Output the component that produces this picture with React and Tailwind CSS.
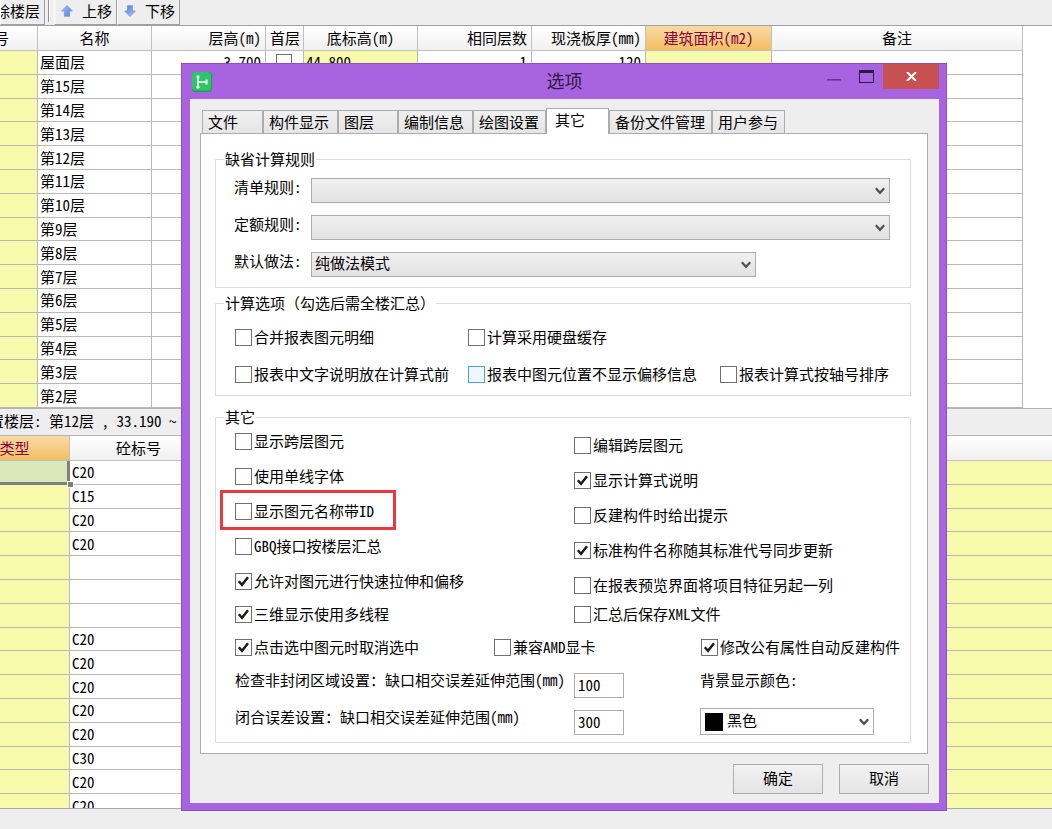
import React, { useState } from "react";
import clsx from "clsx";

const floors = [
  "屋面层",
  "第15层",
  "第14层",
  "第13层",
  "第12层",
  "第11层",
  "第10层",
  "第9层",
  "第8层",
  "第7层",
  "第6层",
  "第5层",
  "第4层",
  "第3层",
  "第2层",
];

const grades = [
  "C20",
  "C15",
  "C20",
  "C20",
  "",
  "",
  "",
  "C20",
  "C20",
  "C20",
  "C20",
  "C20",
  "C30",
  "C20",
  "C20",
];

const tabs = [
  { name: "文件", width: "w-[61px]" },
  { name: "构件显示", width: "w-[75px]" },
  { name: "图层", width: "w-[60px]" },
  { name: "编制信息", width: "w-[75px]" },
  { name: "绘图设置", width: "w-[73px]" },
  { name: "其它", width: "w-[63px]" },
  { name: "备份文件管理", width: "w-[103px]" },
  { name: "用户参与", width: "w-[73px]" },
];

const leftOptions = [
  { text: "显示跨层图元" },
  { text: "使用单线字体" },
  { text: "显示图元名称带ID", marked: true },
  { text: "GBQ接口按楼层汇总" },
  { text: "允许对图元进行快速拉伸和偏移", checked: true },
];

const rightOptions = [
  { text: "编辑跨层图元" },
  { text: "显示计算式说明", checked: true },
  { text: "反建构件时给出提示" },
  { text: "标准构件名称随其标准代号同步更新", checked: true },
  { text: "在报表预览界面将项目特征另起一列" },
];

const App = () => {
  return (
    <div className="relative flex h-screen min-h-[829px] flex-col overflow-hidden bg-[#eeeeee] font-['Noto_Sans_CJK_SC',sans-serif] text-[15px] leading-[18px] text-black [font-feature-settings:'hwid']">
      <Toolbar />
      <FloorTable />
      <div className="flex h-[28px] shrink-0 items-center border-y border-[#b4b4b4] bg-[#eeeeee] pb-[2px]">
        <p className="-ml-[11px] whitespace-nowrap">
          置楼层: 第12层 , 33.190 ~
        </p>
      </div>
      <GradeTable />
      <div className="h-[21px] shrink-0 border-t border-[#a8a8b0]" />
      <OptionsDialog />
    </div>
  );
};

const Toolbar = () => (
  <div className="flex h-[26px] shrink-0 items-start border-b border-[#a0a0a0]">
    <ToolButton className="w-[45px] justify-end pr-[4px]">删除楼层</ToolButton>
    <div className="ml-[3px] h-[22px] w-[2px] border-x border-r-white border-l-[#909090]" />
    <ToolButton className="ml-[4px] w-[63px] justify-between pr-[4px] pl-[5px]">
      <Arrow />
      上移
    </ToolButton>
    <ToolButton className="w-[63px] justify-between pr-[4px] pl-[5px]">
      <Arrow down />
      下移
    </ToolButton>
  </div>
);

const ToolButton = ({ className, children }) => (
  <button
    type="button"
    className={clsx(
      "flex h-[25px] items-center overflow-hidden border-r border-b border-l border-r-[#a0a0a0] border-b-[#a0a0a0] border-l-white pb-[3px] whitespace-nowrap",
      className
    )}
  >
    {children}
  </button>
);

const Arrow = ({ down }) => (
  <svg
    width="14"
    height="14"
    viewBox="0 0 14 14"
    className={clsx(down && "rotate-180")}
  >
    <defs>
      <linearGradient id="arrow" x1="0" y1="0" x2="1" y2="1">
        <stop offset="0" stopColor="#a9c8f5" />
        <stop offset="1" stopColor="#4d7bd6" />
      </linearGradient>
    </defs>
    <path
      d="M7 1.5 L12.3 7 H9.6 V12.3 H4.4 V7 H1.7 Z"
      fill="url(#arrow)"
      stroke="#6f93dc"
      strokeWidth="0.8"
    />
  </svg>
);

const Th = ({ className, children }) => (
  <th
    className={clsx(
      "h-[25px] border-r border-b border-[#c0c0c0] bg-linear-to-b p-0 px-[4px] font-normal whitespace-nowrap",
      className ?? "from-white to-[#f0f0f0]"
    )}
  >
    {children}
  </th>
);

const Td = ({ className, children }) => (
  <td
    className={clsx(
      "h-[23px] border-r border-b border-[#b8b8b8] p-0 pr-[4px] pl-[2px] whitespace-nowrap",
      className
    )}
  >
    {children}
  </td>
);

const FloorTable = () => (
  <div className="shrink-0 overflow-hidden bg-white pr-[29px]">
    {/* the first column runs off the left edge, as if scrolled */}
    <div className="-ml-[49px]">
      <table className="h-[382px] w-full table-fixed border-separate border-spacing-0">
        <colgroup>
          <col className="w-[87px]" />
          <col className="w-[114px]" />
          <col className="w-[114px]" />
          <col className="w-[38px]" />
          <col className="w-[114px]" />
          <col className="w-[114px]" />
          <col className="w-[114px]" />
          <col className="w-[126px]" />
          <col />
        </colgroup>
        <thead>
          <tr>
            <Th>编号</Th>
            <Th>名称</Th>
            <Th className="from-white to-[#f0f0f0] text-right">层高(m)</Th>
            <Th className="from-white to-[#f0f0f0] px-0">首层</Th>
            <Th>底标高(m)</Th>
            <Th className="from-white to-[#f0f0f0] text-right">相同层数</Th>
            <Th className="from-white to-[#f0f0f0] text-right">
              现浇板厚(mm)
            </Th>
            <Th className="from-[#f8d9a4] to-[#f2bf62] text-[#800040]">
              建筑面积(m2)
            </Th>
            <Th>备注</Th>
          </tr>
        </thead>
        <tbody>
          {floors.map((floor, i) => (
            <tr key={floor}>
              <Td className="bg-[#f6faaa]" />
              <Td>{floor}</Td>
              <Td className="text-right">{i === 0 && "3.700"}</Td>
              <Td>
                {i === 0 && (
                  <input
                    type="checkbox"
                    aria-label="首层"
                    className="mx-auto block size-[16px] appearance-none border border-[#707070] bg-white"
                  />
                )}
              </Td>
              <Td className="bg-[#f6faaa]">{i === 0 && "44.800"}</Td>
              <Td className="text-right">{i === 0 && "1"}</Td>
              <Td className="text-right">{i === 0 && "120"}</Td>
              <Td className="bg-[#f6faaa]" />
              <Td />
            </tr>
          ))}
        </tbody>
      </table>
    </div>
  </div>
);

const GradeTable = () => (
  <div className="min-h-0 flex-1 overflow-hidden bg-white">
    <div className="-mr-px -ml-[70px]">
      <table className="h-[382px] w-full table-fixed border-separate border-spacing-0">
        <colgroup>
          <col className="w-[140px]" />
          <col className="w-[138px]" />
          <col />
        </colgroup>
        <thead>
          <tr>
            <Th className="from-[#f8d9a4] to-[#f2bf62] text-[#800040]">
              构件类型
            </Th>
            <Th>砼标号</Th>
            <Th />
          </tr>
        </thead>
        <tbody>
          {grades.map((grade, i) => (
            <tr key={i}>
              <Td
                className={
                  i === 0
                    ? "relative border-r-[3px] border-b-[3px] border-r-[#808080] border-b-[#808080] bg-[#d9e8b9]"
                    : "bg-[#f6faaa]"
                }
              >
                {i === 0 && (
                  <span className="absolute -right-[7px] -bottom-[6px] size-[7px] border border-white bg-[#808080]" />
                )}
              </Td>
              <Td>{grade}</Td>
              <Td className="bg-[#f6faaa]" />
            </tr>
          ))}
        </tbody>
      </table>
    </div>
  </div>
);

const OptionsDialog = () => {
  const [active, setActive] = useState("其它");

  return (
    <div
      role="dialog"
      aria-labelledby="dialog-title"
      className="absolute top-[63px] left-[181px] w-[766px] border border-[#8c50c0] bg-[#a864e0] pr-[7px] pb-[7px] pl-[8px]"
    >
      <TitleBar />
      <div className="bg-[#eeeeee] pt-[9px] pr-[11px] pb-[9px] pl-[10px]">
        <div role="tablist" className="flex items-end pl-[2px]">
          {tabs.map((tab) => (
            <button
              key={tab.name}
              type="button"
              role="tab"
              aria-selected={tab.name === active}
              onClick={() => setActive(tab.name)}
              className={clsx(
                "border-t border-r border-l border-[#acacac] text-left whitespace-nowrap",
                tab.width,
                tab.name === active
                  ? "-mb-px h-[26px] bg-white pb-[4px] pl-[8px]"
                  : "h-[23px] bg-linear-to-b from-[#f0f0f0] to-[#e5e5e5] pl-[5px]"
              )}
            >
              {tab.name}
            </button>
          ))}
        </div>
        <div className="border border-[#acacac] bg-white pt-[16px] pr-[16px] pb-[10px] pl-[14px]">
          <RuleGroup />
          <CalcGroup />
          <OtherGroup />
        </div>
        <div className="-mr-px mt-[10px] flex justify-end gap-[16px]">
          <DialogButton>确定</DialogButton>
          <DialogButton>取消</DialogButton>
        </div>
      </div>
    </div>
  );
};

const TitleBar = () => (
  <div className="grid h-[35px] grid-cols-[1fr_auto_1fr] items-center">
    <AppIcon />
    <h1
      id="dialog-title"
      className="pb-[3px] text-[18px] leading-[24px] text-[#2e1a40]"
    >
      选项
    </h1>
    <div className="flex items-start justify-end self-start">
      <button
        type="button"
        aria-label="最小化"
        className="flex h-[25px] w-[30px] items-center justify-center"
      >
        <svg width="14" height="8" viewBox="0 0 14 8">
          <path d="M0 6.8 H14" stroke="#5c3780" strokeWidth="1.5" />
        </svg>
      </button>
      <button
        type="button"
        aria-label="最大化"
        className="flex h-[25px] w-[34px] items-center justify-center"
      >
        <svg width="15" height="13" viewBox="0 0 15 13">
          <rect
            x="0.5"
            y="0.5"
            width="14"
            height="12"
            fill="none"
            stroke="#2e1a40"
          />
          <rect width="15" height="3" fill="#2e1a40" />
        </svg>
      </button>
      <button
        type="button"
        aria-label="关闭"
        className="flex h-[25px] w-[56px] items-center justify-center bg-[#c75050]"
      >
        <svg width="11" height="9" viewBox="0 0 11 9">
          <path d="M1 0 L10 9 M10 0 L1 9" stroke="#fff" strokeWidth="2" />
        </svg>
      </button>
    </div>
  </div>
);

const AppIcon = () => (
  <svg width="20" height="20" viewBox="0 0 20 20" className="ml-[2px]">
    <rect width="20" height="20" rx="3" fill="#1fa050" />
    <rect width="19" height="18.5" rx="3" fill="#2cc569" />
    <path
      d="M6 5 V15 M6 10 H14"
      fill="none"
      stroke="#fff"
      strokeWidth="1.6"
    />
    <circle cx="6" cy="4.8" r="1.6" fill="#fff" />
    <circle cx="6" cy="15" r="1.6" fill="#fff" />
    <path d="M14.5 7.5 V12.5" stroke="#fff" strokeWidth="2" />
  </svg>
);

const DialogButton = ({ children }) => (
  <button
    type="button"
    className="h-[30px] w-[90px] border border-[#acacac] bg-linear-to-b from-[#f2f2f2] to-[#e4e4e4] pb-[3px]"
  >
    {children}
  </button>
);

const Group = ({ title, className, children }) => (
  <fieldset className={clsx("border border-[#dcdcdc]", className)}>
    {/* full-width brackets in the titles */}
    <legend className="ml-[8px] px-px [font-feature-settings:normal]">
      {title}
    </legend>
    {children}
  </fieldset>
);

const Select = ({ id, options, className, swatch }) => (
  <div className={clsx("grid items-center", className)}>
    <select
      id={id}
      className={clsx(
        "col-start-1 row-start-1 h-full w-full appearance-none border border-[#acacac] pb-[3px]",
        swatch
          ? "bg-white pl-[26px]"
          : "bg-linear-to-b from-[#f0f0f0] to-[#e2e2e2] pl-[3px]"
      )}
    >
      {options.map((option) => (
        <option key={option}>{option}</option>
      ))}
    </select>
    {swatch && (
      <span className="pointer-events-none col-start-1 row-start-1 ml-[5px] size-[18px] bg-black" />
    )}
    <svg
      width="10"
      height="8"
      viewBox="0 0 10 8"
      className="pointer-events-none col-start-1 row-start-1 mt-px mr-[5px] justify-self-end"
    >
      <path
        d="M0.8 1.2 L5 5.8 L9.2 1.2"
        fill="none"
        stroke="#505050"
        strokeWidth="2.2"
      />
    </svg>
  </div>
);

const Check = ({ text, checked, hot, marked }) => (
  <label className="relative flex h-[18px] items-center gap-[2px] whitespace-nowrap">
    <span className="grid shrink-0">
      <input
        type="checkbox"
        defaultChecked={checked}
        className={clsx(
          "peer col-start-1 row-start-1 size-[17px] appearance-none border",
          hot ? "border-[#4a9cf0] bg-[#eff7ff]" : "border-[#707070] bg-white"
        )}
      />
      <svg
        width="17"
        height="17"
        viewBox="0 0 17 17"
        className="pointer-events-none invisible col-start-1 row-start-1 peer-checked:visible"
      >
        <path
          d="M3.8 8.2 L7 11.8 L13 4.2"
          fill="none"
          stroke="#1a1a1a"
          strokeWidth="2.4"
        />
      </svg>
    </span>
    {text}
    {marked && (
      <span className="absolute -top-[12px] -left-[15px] h-[40px] w-[176px] border-3 border-[#e83a3f]" />
    )}
  </label>
);

const RuleGroup = () => (
  <Group title="缺省计算规则">
    <div className="grid grid-cols-[77px_1fr] gap-y-[12px] pt-[10px] pr-[20px] pb-[10px] pl-[18px]">
      <label htmlFor="list-rule">清单规则:</label>
      <Select id="list-rule" options={[""]} className="h-[25px]" />
      <label htmlFor="quota-rule">定额规则:</label>
      <Select id="quota-rule" options={[""]} className="h-[25px]" />
      <label htmlFor="method">默认做法:</label>
      <Select
        id="method"
        options={["纯做法模式"]}
        className="h-[25px] w-[445px]"
      />
    </div>
  </Group>
);

const CalcGroup = () => (
  <Group title="计算选项（勾选后需全楼汇总）" className="mt-[6px]">
    <div className="grid grid-cols-[233px_252px_1fr] gap-y-[19px] pt-[16px] pb-[12px] pl-[19px]">
      <Check text="合并报表图元明细" />
      <Check text="计算采用硬盘缓存" />
      <span />
      <Check text="报表中文字说明放在计算式前" />
      <Check text="报表中图元位置不显示偏移信息" hot />
      <Check text="报表计算式按轴号排序" />
    </div>
  </Group>
);

const OtherGroup = () => (
  <Group title="其它" className="mt-[12px]">
    <div className="pt-[6px] pb-[7px] pl-[19px]">
      <div className="grid grid-cols-[339px_1fr]">
        <div className="flex flex-col gap-[17px]">
          {leftOptions.map((option) => (
            <Check key={option.text} {...option} />
          ))}
        </div>
        <div className="flex flex-col gap-[17px] pt-[4px]">
          {rightOptions.map((option) => (
            <Check key={option.text} {...option} />
          ))}
        </div>
      </div>
      <div className="mt-[11px] grid grid-cols-[339px_1fr]">
        <Check text="三维显示使用多线程" checked />
        <Check text="汇总后保存XML文件" />
      </div>
      <div className="mt-[15px] grid grid-cols-[259px_207px_1fr]">
        <Check text="点击选中图元时取消选中" checked />
        <Check text="兼容AMD显卡" />
        <Check text="修改公有属性自动反建构件" checked />
      </div>
      <div className="mt-[15px] grid grid-cols-[339px_126px_1fr] gap-y-[10px]">
        <label htmlFor="area-range" className="whitespace-nowrap">
          检查非封闭区域设置：缺口相交误差延伸范围(mm)
        </label>
        <NumberBox id="area-range" value="100" />
        <label htmlFor="back-color">背景显示颜色:</label>
        <label htmlFor="close-range" className="whitespace-nowrap">
          闭合误差设置：缺口相交误差延伸范围(mm)
        </label>
        <NumberBox id="close-range" value="300" />
        <Select
          id="back-color"
          options={["黑色"]}
          swatch
          className="h-[27px] w-[174px]"
        />
      </div>
    </div>
  </Group>
);

const NumberBox = ({ id, value }) => (
  <input
    id={id}
    type="text"
    defaultValue={value}
    className="mt-[2px] h-[25px] w-[50px] border border-[#acacac] bg-white px-[3px] pb-[3px]"
  />
);

export default App;
